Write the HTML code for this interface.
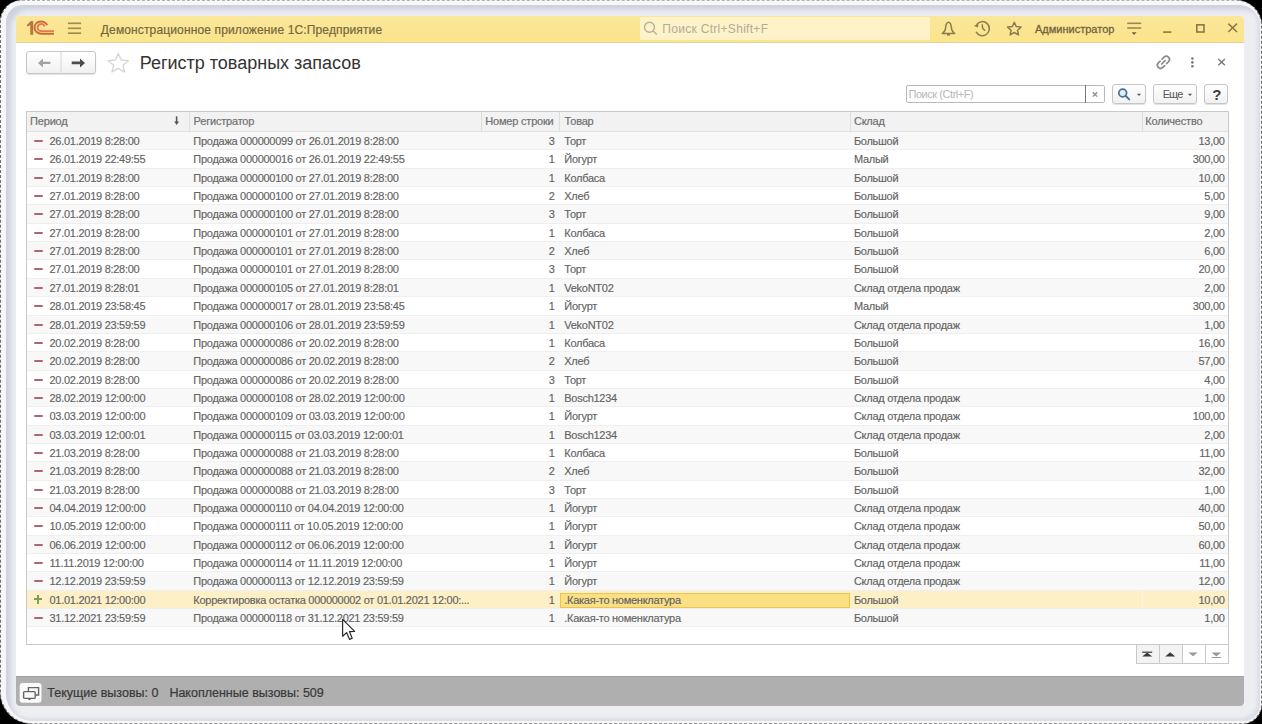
<!DOCTYPE html>
<html><head><meta charset="utf-8">
<style>
*{margin:0;padding:0;box-sizing:border-box}
html,body{width:1262px;height:724px;overflow:hidden;background:#000}
body{position:relative;font-family:"Liberation Sans",sans-serif;color:#333}
.abs{position:absolute}
#outer{position:absolute;left:0;top:0;width:1262px;height:724px;border-radius:22px 26px 20px 32px;background:#f7f7fa}
#frame{position:absolute;left:6px;top:5px;right:2px;bottom:3px;border-radius:17px 21px 16px 27px;background:#eceef2;box-shadow:inset 6px 6px 5px -1px rgba(170,175,200,.45), inset -4px -4px 3px -1px rgba(190,195,210,.35)}
#edge{position:absolute;left:0;top:0;width:1262px;height:724px;border-radius:22px 26px 20px 32px;border:1px dashed;border-color:rgba(20,20,20,.3) rgba(20,20,20,.6) rgba(20,20,20,.45) rgba(20,20,20,.6);}
#win{position:absolute;left:16px;top:16px;width:1228px;height:690px;background:#fff;border-radius:4px 4px 3px 3px;overflow:hidden}
#tb{position:absolute;left:0;top:0;width:1228px;height:27px;background:linear-gradient(#fae79a,#fbe592 55%,#fbe48a);border-bottom:1.5px solid #e2d6a0}
#tb .ttl{position:absolute;left:84.8px;top:7px;font-size:12px;letter-spacing:0.14px;color:#74683f;-webkit-text-stroke:0.2px #74683f;white-space:nowrap}
#srch{position:absolute;left:624.3px;top:1px;width:289.5px;height:22.8px;background:#fdf2c8}
#srch .t{position:absolute;left:22px;top:5px;font-size:12px;letter-spacing:0.3px;color:#b3ac96;white-space:nowrap}
.hdr-txt{position:absolute;font-size:11px;color:#706440;-webkit-text-stroke:0.3px #706440;white-space:nowrap}
#status{position:absolute;left:0;top:660.4px;width:1228px;height:29.3px;background:#afafaf;border-top:1px solid #a2a2a2;border-radius:0 0 4px 4px}
#status .t{position:absolute;top:9px;font-size:12.5px;color:#383838;-webkit-text-stroke:0.2px #383838;white-space:nowrap}
#title{position:absolute;left:123.7px;top:37px;font-size:18px;color:#333;white-space:nowrap}
.btn{position:absolute;border:1px solid #c6c6c6;border-radius:3px;background:linear-gradient(#fff,#f1f1f1);box-shadow:0 1px 1px rgba(0,0,0,.12)}
#tbl{position:absolute;left:10px;top:95px;width:1203px;height:534px;border:1px solid #c9c9c9;background:#fff;overflow:hidden}
#th{position:absolute;left:0;top:0;width:1201px;height:20px;background:#f2f2f2;border-bottom:1px solid #e0e0e0}
#th span{position:absolute;top:2.5px;font-size:11px;letter-spacing:-0.2px;color:#707070;-webkit-text-stroke:0.2px #707070;white-space:nowrap}
#th i{position:absolute;top:0;width:1px;height:20px;background:#dedede}
#rows{position:absolute;left:0;top:20px;width:1201px}
.r{position:absolute;left:0;width:1201px;height:18.35px;border-bottom:1px solid #efefef;font-size:11px;letter-spacing:-0.27px;color:#636363;-webkit-text-stroke:0.15px #636363;white-space:nowrap}
.r.g{background:#f8f8f8}
.r.sel{background:#fdefc6}
.r.sel:after{content:"";position:absolute;left:1114.6px;top:0;width:1px;height:100%;background:#fbf5e2}
.r span{position:absolute;top:3px}
.r .c1{left:22.5px}
.r .c2{left:166.3px}
.r .c3{right:673.5px;text-align:right}
.r .c4{left:537.3px}
.r .c5{left:826.9px}
.r .c6{right:3.3px;text-align:right}
.r .mi{position:absolute;left:6.6px;top:7.8px;width:9px;height:2.2px;border-radius:1px;background:#ad6670}
.r .pl{position:absolute;left:6.6px;top:4.3px;width:8.4px;height:8.4px}
.r .pl:before{content:"";position:absolute;left:0;top:3.2px;width:8.4px;height:2px;background:#7f9f55}
.r .pl:after{content:"";position:absolute;left:3.2px;top:0;width:2px;height:8.4px;background:#7f9f55}
.r .cur{position:absolute;left:532.5px;top:1.5px;width:290.5px;height:15.7px;background:#fadf85;border:1px solid #ebc54e}
</style></head><body>
<div id="all" style="position:absolute;left:0;top:0;width:1262px;height:724px">
<div id="outer"></div>
<div id="frame"></div>
<div id="edge"></div>
<div id="win">
  <div id="tb">
    <div class="ttl">Демонстрационное приложение 1С:Предприятие</div>
    <div id="srch"><div class="t">Поиск Ctrl+Shift+F</div></div>
    <div class="hdr-txt" style="left:1019px;top:7px">Администратор</div>
  </div>
  <div class="btn" style="left:9.7px;top:35px;width:70.7px;height:23px"></div>
  <div id="title">Регистр товарных запасов</div>

  <div class="btn" style="left:889.5px;top:68.7px;width:199.5px;height:18.8px;border-color:#b9b9b9;border-radius:2px;background:#fff;box-shadow:none"></div>
  <div style="position:absolute;left:1069.3px;top:69.3px;width:1px;height:18px;background:#777"></div>
  <div style="position:absolute;left:892.5px;top:72px;font-size:11px;letter-spacing:-0.45px;color:#b8b8b8;white-space:nowrap">Поиск (Ctrl+F)</div>
  <div class="btn" style="left:1096.2px;top:68.2px;width:34px;height:19.6px"></div>
  <div class="btn" style="left:1137px;top:68.2px;width:44.2px;height:19.6px"></div>
  <div style="position:absolute;left:1146.7px;top:72.3px;font-size:11px;letter-spacing:-0.9px;color:#555;white-space:nowrap">Еще</div>
  <div class="btn" style="left:1187.9px;top:68.2px;width:24.2px;height:19.6px"></div>
  <div style="position:absolute;left:1196.2px;top:70.2px;font-size:15px;font-weight:bold;color:#3c3c3c;white-space:nowrap">?</div>
  <div id="bnav" style="position:absolute;left:1119.7px;top:628.3px;width:93.3px;height:20px;border:1px solid #c9c9c9;border-top:none;background:#fff"></div>
  <div style="position:absolute;left:1120.7px;top:628.3px;width:45.8px;height:19px;background:#f3f3f3"></div>
  <div style="position:absolute;left:1142.5px;top:628.3px;width:1px;height:20px;background:#c9c9c9"></div>
  <div style="position:absolute;left:1165.8px;top:628.3px;width:1px;height:20px;background:#c9c9c9"></div>
  <div style="position:absolute;left:1188.6px;top:628.3px;width:1px;height:20px;background:#c9c9c9"></div>
  <div id="tbl">
    <div id="th">
      <span style="left:3.1px">Период</span>
      <i style="left:161.7px"></i>
      <span style="left:166.6px">Регистратор</span>
      <i style="left:454px"></i>
      <span style="left:458.3px">Номер строки</span>
      <i style="left:531.6px"></i>
      <span style="left:537.6px">Товар</span>
      <i style="left:823.4px"></i>
      <span style="left:826.9px">Склад</span>
      <i style="left:1114.6px"></i>
      <span style="left:1118.3px">Количество</span>
    </div>
    <div id="rows">
<div class="r g" style="top:0.0px;height:18px"><i class="mi"></i><span class="c1">26.01.2019 8:28:00</span><span class="c2">Продажа 000000099 от 26.01.2019 8:28:00</span><span class="c3">3</span><span class="c4">Торт</span><span class="c5">Большой</span><span class="c6">13,00</span></div>
<div class="r" style="top:18.0px;height:19px"><i class="mi"></i><span class="c1">26.01.2019 22:49:55</span><span class="c2">Продажа 000000016 от 26.01.2019 22:49:55</span><span class="c3">1</span><span class="c4">Йогурт</span><span class="c5">Малый</span><span class="c6">300,00</span></div>
<div class="r g" style="top:37.0px;height:18px"><i class="mi"></i><span class="c1">27.01.2019 8:28:00</span><span class="c2">Продажа 000000100 от 27.01.2019 8:28:00</span><span class="c3">1</span><span class="c4">Колбаса</span><span class="c5">Большой</span><span class="c6">10,00</span></div>
<div class="r" style="top:55.0px;height:18px"><i class="mi"></i><span class="c1">27.01.2019 8:28:00</span><span class="c2">Продажа 000000100 от 27.01.2019 8:28:00</span><span class="c3">2</span><span class="c4">Хлеб</span><span class="c5">Большой</span><span class="c6">5,00</span></div>
<div class="r g" style="top:73.0px;height:19px"><i class="mi"></i><span class="c1">27.01.2019 8:28:00</span><span class="c2">Продажа 000000100 от 27.01.2019 8:28:00</span><span class="c3">3</span><span class="c4">Торт</span><span class="c5">Большой</span><span class="c6">9,00</span></div>
<div class="r" style="top:92.0px;height:18px"><i class="mi"></i><span class="c1">27.01.2019 8:28:00</span><span class="c2">Продажа 000000101 от 27.01.2019 8:28:00</span><span class="c3">1</span><span class="c4">Колбаса</span><span class="c5">Большой</span><span class="c6">2,00</span></div>
<div class="r g" style="top:110.0px;height:18px"><i class="mi"></i><span class="c1">27.01.2019 8:28:00</span><span class="c2">Продажа 000000101 от 27.01.2019 8:28:00</span><span class="c3">2</span><span class="c4">Хлеб</span><span class="c5">Большой</span><span class="c6">6,00</span></div>
<div class="r" style="top:128.0px;height:19px"><i class="mi"></i><span class="c1">27.01.2019 8:28:00</span><span class="c2">Продажа 000000101 от 27.01.2019 8:28:00</span><span class="c3">3</span><span class="c4">Торт</span><span class="c5">Большой</span><span class="c6">20,00</span></div>
<div class="r g" style="top:147.0px;height:18px"><i class="mi"></i><span class="c1">27.01.2019 8:28:01</span><span class="c2">Продажа 000000105 от 27.01.2019 8:28:01</span><span class="c3">1</span><span class="c4">VekoNT02</span><span class="c5">Склад отдела продаж</span><span class="c6">2,00</span></div>
<div class="r" style="top:165.0px;height:19px"><i class="mi"></i><span class="c1">28.01.2019 23:58:45</span><span class="c2">Продажа 000000017 от 28.01.2019 23:58:45</span><span class="c3">1</span><span class="c4">Йогурт</span><span class="c5">Малый</span><span class="c6">300,00</span></div>
<div class="r g" style="top:184.0px;height:18px"><i class="mi"></i><span class="c1">28.01.2019 23:59:59</span><span class="c2">Продажа 000000106 от 28.01.2019 23:59:59</span><span class="c3">1</span><span class="c4">VekoNT02</span><span class="c5">Склад отдела продаж</span><span class="c6">1,00</span></div>
<div class="r" style="top:202.0px;height:18px"><i class="mi"></i><span class="c1">20.02.2019 8:28:00</span><span class="c2">Продажа 000000086 от 20.02.2019 8:28:00</span><span class="c3">1</span><span class="c4">Колбаса</span><span class="c5">Большой</span><span class="c6">16,00</span></div>
<div class="r g" style="top:220.0px;height:19px"><i class="mi"></i><span class="c1">20.02.2019 8:28:00</span><span class="c2">Продажа 000000086 от 20.02.2019 8:28:00</span><span class="c3">2</span><span class="c4">Хлеб</span><span class="c5">Большой</span><span class="c6">57,00</span></div>
<div class="r" style="top:239.0px;height:18px"><i class="mi"></i><span class="c1">20.02.2019 8:28:00</span><span class="c2">Продажа 000000086 от 20.02.2019 8:28:00</span><span class="c3">3</span><span class="c4">Торт</span><span class="c5">Большой</span><span class="c6">4,00</span></div>
<div class="r g" style="top:257.0px;height:18px"><i class="mi"></i><span class="c1">28.02.2019 12:00:00</span><span class="c2">Продажа 000000108 от 28.02.2019 12:00:00</span><span class="c3">1</span><span class="c4">Bosch1234</span><span class="c5">Склад отдела продаж</span><span class="c6">1,00</span></div>
<div class="r" style="top:275.0px;height:19px"><i class="mi"></i><span class="c1">03.03.2019 12:00:00</span><span class="c2">Продажа 000000109 от 03.03.2019 12:00:00</span><span class="c3">1</span><span class="c4">Йогурт</span><span class="c5">Склад отдела продаж</span><span class="c6">100,00</span></div>
<div class="r g" style="top:294.0px;height:18px"><i class="mi"></i><span class="c1">03.03.2019 12:00:01</span><span class="c2">Продажа 000000115 от 03.03.2019 12:00:01</span><span class="c3">1</span><span class="c4">Bosch1234</span><span class="c5">Склад отдела продаж</span><span class="c6">2,00</span></div>
<div class="r" style="top:312.0px;height:18px"><i class="mi"></i><span class="c1">21.03.2019 8:28:00</span><span class="c2">Продажа 000000088 от 21.03.2019 8:28:00</span><span class="c3">1</span><span class="c4">Колбаса</span><span class="c5">Большой</span><span class="c6">11,00</span></div>
<div class="r g" style="top:330.0px;height:19px"><i class="mi"></i><span class="c1">21.03.2019 8:28:00</span><span class="c2">Продажа 000000088 от 21.03.2019 8:28:00</span><span class="c3">2</span><span class="c4">Хлеб</span><span class="c5">Большой</span><span class="c6">32,00</span></div>
<div class="r" style="top:349.0px;height:18px"><i class="mi"></i><span class="c1">21.03.2019 8:28:00</span><span class="c2">Продажа 000000088 от 21.03.2019 8:28:00</span><span class="c3">3</span><span class="c4">Торт</span><span class="c5">Большой</span><span class="c6">1,00</span></div>
<div class="r g" style="top:367.0px;height:18px"><i class="mi"></i><span class="c1">04.04.2019 12:00:00</span><span class="c2">Продажа 000000110 от 04.04.2019 12:00:00</span><span class="c3">1</span><span class="c4">Йогурт</span><span class="c5">Склад отдела продаж</span><span class="c6">40,00</span></div>
<div class="r" style="top:385.0px;height:19px"><i class="mi"></i><span class="c1">10.05.2019 12:00:00</span><span class="c2">Продажа 000000111 от 10.05.2019 12:00:00</span><span class="c3">1</span><span class="c4">Йогурт</span><span class="c5">Склад отдела продаж</span><span class="c6">50,00</span></div>
<div class="r g" style="top:404.0px;height:18px"><i class="mi"></i><span class="c1">06.06.2019 12:00:00</span><span class="c2">Продажа 000000112 от 06.06.2019 12:00:00</span><span class="c3">1</span><span class="c4">Йогурт</span><span class="c5">Склад отдела продаж</span><span class="c6">60,00</span></div>
<div class="r" style="top:422.0px;height:18px"><i class="mi"></i><span class="c1">11.11.2019 12:00:00</span><span class="c2">Продажа 000000114 от 11.11.2019 12:00:00</span><span class="c3">1</span><span class="c4">Йогурт</span><span class="c5">Склад отдела продаж</span><span class="c6">11,00</span></div>
<div class="r g" style="top:440.0px;height:19px"><i class="mi"></i><span class="c1">12.12.2019 23:59:59</span><span class="c2">Продажа 000000113 от 12.12.2019 23:59:59</span><span class="c3">1</span><span class="c4">Йогурт</span><span class="c5">Склад отдела продаж</span><span class="c6">12,00</span></div>
<div class="r sel" style="top:459.0px;height:18px"><i class="pl"></i><span class="c1">01.01.2021 12:00:00</span><span class="c2">Корректировка остатка 000000002 от 01.01.2021 12:00:...</span><span class="c3">1</span><span class="cur"></span><span class="c4">.Какая-то номенклатура</span><span class="c5">Большой</span><span class="c6">10,00</span></div>
<div class="r g" style="top:477.0px;height:18px"><i class="mi"></i><span class="c1">31.12.2021 23:59:59</span><span class="c2">Продажа 000000118 от 31.12.2021 23:59:59</span><span class="c3">1</span><span class="c4">.Какая-то номенклатура</span><span class="c5">Большой</span><span class="c6">1,00</span></div>
    </div>
  </div>
  <div id="status">
    <div class="t" style="left:31.3px">Текущие вызовы: 0</div>
    <div class="t" style="left:153.4px">Накопленные вызовы: 509</div>
  </div>
</div>
<svg id="ov" width="1262" height="724" viewBox="0 0 1262 724" style="position:absolute;left:0;top:0;pointer-events:none">
<!-- 1C logo -->
<path d="M26.6 25.2 L31 21 L33.2 21 L33.2 34.7 L30.3 34.7 L30.3 24.9 L27.8 26.6 Z" fill="#b8753f"/>
<g fill="none">
  <path d="M47.2 25.2 A6.6 6.1 0 1 0 41.2 33.7 L54 33.7" stroke="#c86a3e" stroke-width="2"/>
  <path d="M44.6 26.5 A3.6 3.6 0 1 0 41.2 31.2 L54 31.2" stroke="#e07a52" stroke-width="1.8"/>
</g>
<!-- hamburger -->
<g stroke="#a08d4e" stroke-width="1.7">
  <line x1="67.9" y1="23.3" x2="81.1" y2="23.3"/>
  <line x1="67.9" y1="28.3" x2="81.1" y2="28.3"/>
  <line x1="67.9" y1="33.2" x2="81.1" y2="33.2"/>
</g>
<!-- header search magnifier -->
<g fill="none" stroke="#b8b09a" stroke-width="1.4">
  <circle cx="649.5" cy="27.2" r="5"/>
  <line x1="653" y1="30.8" x2="656.8" y2="34.6"/>
</g>
<!-- bell -->
<g fill="none" stroke="#8c7d4c" stroke-width="1.5" stroke-linejoin="round">
  <path d="M948.5 22.2 C945.6 22.2 945.8 27 945.3 29.5 C944.9 31.3 943.3 32.6 942.4 33.4 L954.6 33.4 C953.7 32.6 952.1 31.3 951.7 29.5 C951.2 27 951.4 22.2 948.5 22.2 Z"/>
</g>
<rect x="947.1" y="34" width="2.8" height="1.7" fill="#8c7d4c"/>
<!-- history -->
<g fill="none" stroke="#8c7d4c" stroke-width="1.5">
  <path d="M976.6 24.6 A7 7 0 1 1 976.1 31.8"/>
  <path d="M982.3 24.2 L982.6 28.2 L985 30.8"/>
</g>
<path d="M974 25.9 L978.4 23.6 L978 27.6 Z" fill="#8c7d4c"/>
<!-- star header -->
<path d="M1014.3 22.2 L1016.3 26.6 L1021 27.1 L1017.5 30.3 L1018.5 34.9 L1014.3 32.5 L1010.1 34.9 L1011.1 30.3 L1007.6 27.1 L1012.3 26.6 Z" fill="none" stroke="#8c7d4c" stroke-width="1.5" stroke-linejoin="round"/>
<!-- filter -->
<g stroke="#9a8a52" stroke-width="1.6">
  <line x1="1127.2" y1="23.3" x2="1141.2" y2="23.3"/>
  <line x1="1127.2" y1="28" x2="1141.2" y2="28"/>
</g>
<path d="M1131.6 32.2 L1136.6 32.2 L1134.1 35 Z" fill="#6f6337"/>
<!-- min max close -->
<line x1="1163.1" y1="32.1" x2="1171.4" y2="32.1" stroke="#8a7a48" stroke-width="1.6"/>
<rect x="1196.8" y="24.8" width="7.2" height="7.2" fill="none" stroke="#8a7a48" stroke-width="1.6"/>
<g stroke="#8a7a48" stroke-width="1.5"><line x1="1228.3" y1="23.6" x2="1237" y2="32"/><line x1="1237" y1="23.6" x2="1228.3" y2="32"/></g>
<!-- nav arrows -->
<g fill="#a3a3a3"><path d="M38 62.9 L43 58.4 L43 61.7 L50.4 61.7 L50.4 64.1 L43 64.1 L43 67.4 Z"/></g>
<g fill="#4e4e4e"><path d="M85 62.9 L80 58.4 L80 61.6 L71.7 61.6 L71.7 64.2 L80 64.2 L80 67.4 Z"/></g>
<line x1="61" y1="52" x2="61" y2="74" stroke="#d6d6d6" stroke-width="1"/>
<!-- star title -->
<path d="M118.3 53.6 L121.2 60 L128.4 60.6 L123 65.3 L124.6 72 L118.3 68.4 L112 72 L113.6 65.3 L108.2 60.6 L115.4 60 Z" fill="none" stroke="#d4d4d4" stroke-width="1.3" stroke-linejoin="round"/>
<!-- link icon -->
<g transform="translate(1163.4 62.3) rotate(-45)" fill="none" stroke="#8c8c8c" stroke-width="1.7" stroke-linecap="round">
  <path d="M1.4 -3.2 L4 -3.2 A3.2 3.2 0 0 1 4 3.2 L1.4 3.2"/>
  <path d="M-1.4 -3.2 L-4 -3.2 A3.2 3.2 0 0 0 -4 3.2 L-1.4 3.2"/>
  <line x1="-2.4" y1="0" x2="2.4" y2="0"/>
</g>
<g fill="#777"><circle cx="1192.4" cy="58.5" r="1.3"/><circle cx="1192.4" cy="62.4" r="1.3"/><circle cx="1192.4" cy="66.3" r="1.3"/></g>
<g stroke="#7a7a7a" stroke-width="1.4"><line x1="1218.3" y1="58.9" x2="1224.9" y2="65.3"/><line x1="1224.9" y1="58.9" x2="1218.3" y2="65.3"/></g>
<!-- search field x -->
<g stroke="#8c8c8c" stroke-width="1.3"><line x1="1092.8" y1="92.2" x2="1097.2" y2="96.6"/><line x1="1097.2" y1="92.2" x2="1092.8" y2="96.6"/></g>
<!-- magnifier -->
<circle cx="1122.7" cy="93" r="3.9" fill="#dcefff" stroke="#4b6f8c" stroke-width="1.7"/>
<line x1="1125.6" y1="95.9" x2="1129.2" y2="99.4" stroke="#4b6f8c" stroke-width="2" stroke-linecap="round"/>
<path d="M1136.9 93.7 L1141.1 93.7 L1139 95.9 Z" fill="#5a5a5a"/>
<path d="M1187.9 93.7 L1192.1 93.7 L1190 95.9 Z" fill="#5a5a5a"/>
<!-- sort arrow -->
<line x1="176.6" y1="116.3" x2="176.6" y2="122" stroke="#555" stroke-width="1.5"/>
<path d="M174.2 121.4 L179 121.4 L176.6 125 Z" fill="#555"/>
<!-- bottom nav icons -->
<g fill="#3a3a3a">
  <rect x="1142.2" y="651.6" width="10" height="1.2"/>
  <path d="M1142.2 656.6 L1152.2 656.6 L1147.2 652.4 Z"/>
  <path d="M1165.2 656.6 L1175.2 656.6 L1170.2 652.2 Z"/>
</g>
<g fill="#9a9a9a">
  <path d="M1188.3 652.4 L1197.7 652.4 L1193 656.2 Z"/>
  <path d="M1211.6 652.6 L1221 652.6 L1216.3 656.4 Z"/>
  <rect x="1211.6" y="657" width="9.4" height="1"/>
</g>
<!-- status icon -->
<rect x="19.7" y="683" width="21.8" height="19.8" rx="3" fill="#fafafa"/>
<g fill="none" stroke="#666" stroke-width="1.4">
  <path d="M28.4 691 L28.4 687.6 L38.6 687.6 L38.6 695 L35.4 695"/>
  <rect x="23.6" y="691.6" width="11.6" height="6.8" rx="1"/>
</g>
<rect x="28.4" y="698.6" width="2" height="1.4" fill="#555"/>
<!-- cursor -->
<path d="M342.6 619.4 L342.6 636.2 L346.6 632.6 L349.6 639.4 L352.2 638.2 L349.4 631.6 L354.6 631.4 Z" fill="#fff" stroke="#2a2a2a" stroke-width="1.2" stroke-linejoin="round"/>
</svg>
</div>
</body></html>
